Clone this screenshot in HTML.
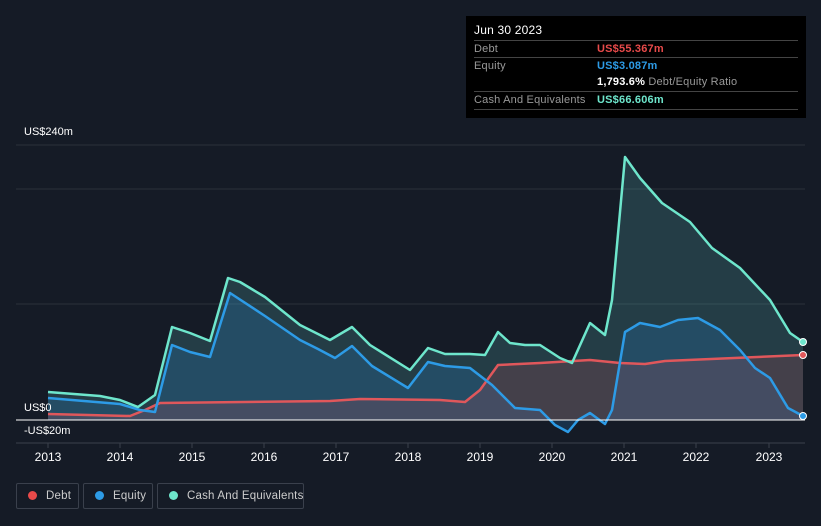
<!DOCTYPE html><html><head><style>
body{margin:0;background:#151b26;width:821px;height:526px;overflow:hidden;font-family:"Liberation Sans",sans-serif;position:relative;color:#fff}
.tt{position:absolute;left:466px;top:16px;width:340px;height:102px;background:#000}
.tt .r{position:absolute;left:8px;right:8px;font-size:11px;color:#999;height:17px;line-height:17px;letter-spacing:0.2px}
.ax{position:absolute;font-size:11px;color:#fff}
.lg{position:absolute;top:483px;height:26px;border:1px solid #3a404c;border-radius:2px;font-size:11.5px;color:#ccc;line-height:24px;box-sizing:border-box;white-space:nowrap;letter-spacing:0.2px}
.lg i{display:inline-block;width:9px;height:9px;border-radius:50%;margin:0 9px 0 11px;vertical-align:-1px}
</style></head><body>
<svg width="821" height="526" style="position:absolute;left:0;top:0">
<g stroke="#2a303b" stroke-width="1"><line x1="16" y1="145" x2="805" y2="145"/><line x1="16" y1="189" x2="805" y2="189"/><line x1="16" y1="304" x2="805" y2="304"/><line x1="16" y1="443" x2="805" y2="443" stroke="#3a404c"/></g>
<polygon fill="rgba(100,200,200,0.2)" points="48,420 48,392 100,396 120,400 138,407 155,395 172,327 190,333 210,341 228,278 240,282 265,297 300,325 330,340 352,327 370,345 410,370 428,348 445,354 470,354 485,355 498,332 510,343 525,345 540,345 560,358 572,363 590,323 605,335 612,300 625,157 640,178 662,203 690,222 712,248 740,268 770,300 790,333 803,342 803,420"/>
<polygon fill="rgba(40,140,220,0.2)" points="48,420 48,398 120,404 140,410 155,412 172,345 190,352 210,357 230,293 265,316 300,340 318,349 335,358 352,346 372,366 408,388 428,362 445,366 470,368 492,385 515,408 540,410 555,425 568,432 578,420 590,413 605,424 612,410 625,332 640,323 660,327 678,320 698,318 720,330 740,350 755,368 770,378 788,408 803,416 803,420"/>
<polygon fill="rgba(200,80,90,0.2)" points="48,420 48,414 130,416 145,410 160,403 330,401 360,399 440,400 465,402 480,390 498,365 540,363 590,360 620,363 645,364 665,361 803,355 803,420"/>
<g fill="none" stroke-width="2.5" stroke-linejoin="round">
<polyline stroke="#e0575b" points="48,414 130,416 145,410 160,403 330,401 360,399 440,400 465,402 480,390 498,365 540,363 590,360 620,363 645,364 665,361 803,355"/>
<polyline stroke="#2d9be6" points="48,398 120,404 140,410 155,412 172,345 190,352 210,357 230,293 265,316 300,340 318,349 335,358 352,346 372,366 408,388 428,362 445,366 470,368 492,385 515,408 540,410 555,425 568,432 578,420 590,413 605,424 612,410 625,332 640,323 660,327 678,320 698,318 720,330 740,350 755,368 770,378 788,408 803,416"/>
<polyline stroke="#6ee6cc" points="48,392 100,396 120,400 138,407 155,395 172,327 190,333 210,341 228,278 240,282 265,297 300,325 330,340 352,327 370,345 410,370 428,348 445,354 470,354 485,355 498,332 510,343 525,345 540,345 560,358 572,363 590,323 605,335 612,300 625,157 640,178 662,203 690,222 712,248 740,268 770,300 790,333 803,342"/>
</g>
<line x1="16" y1="420" x2="805" y2="420" stroke="#fff" stroke-width="1"/>
<circle cx="803" cy="355" r="3.5" fill="#e0575b" stroke="#fff"/><circle cx="803" cy="416" r="3.5" fill="#2d9be6" stroke="#fff"/><circle cx="803" cy="342" r="3.5" fill="#6ee6cc" stroke="#fff"/>
<g stroke="#3a404c"><line x1="48" y1="443" x2="48" y2="448"/><line x1="120" y1="443" x2="120" y2="448"/><line x1="192" y1="443" x2="192" y2="448"/><line x1="264" y1="443" x2="264" y2="448"/><line x1="336" y1="443" x2="336" y2="448"/><line x1="408" y1="443" x2="408" y2="448"/><line x1="480" y1="443" x2="480" y2="448"/><line x1="552" y1="443" x2="552" y2="448"/><line x1="624" y1="443" x2="624" y2="448"/><line x1="696" y1="443" x2="696" y2="448"/><line x1="769" y1="443" x2="769" y2="448"/></g>
<g fill="#fff" font-size="12" text-anchor="middle" font-family="Liberation Sans"><text x="48" y="461">2013</text><text x="120" y="461">2014</text><text x="192" y="461">2015</text><text x="264" y="461">2016</text><text x="336" y="461">2017</text><text x="408" y="461">2018</text><text x="480" y="461">2019</text><text x="552" y="461">2020</text><text x="624" y="461">2021</text><text x="696" y="461">2022</text><text x="769" y="461">2023</text></g>
</svg>
<div class="ax" style="left:24px;top:126px">US$240m</div>
<div class="ax" style="left:24px;top:402px">US$0</div>
<div class="ax" style="left:24px;top:425px">-US$20m</div>
<div class="tt">
<div class="r" style="top:6px;color:#fff;font-size:12px">Jun 30 2023</div>
<div class="r" style="top:24px;border-top:1px solid #444">Debt<span style="position:absolute;left:123px;color:#e84a4a;font-weight:bold">US$55.367m</span></div>
<div class="r" style="top:41px;border-top:1px solid #444">Equity<span style="position:absolute;left:123px;color:#2d9be6;font-weight:bold">US$3.087m</span></div>
<div class="r" style="top:58px"><span style="position:absolute;left:123px"><b style="color:#fff">1,793.6%</b> Debt/Equity Ratio</span></div>
<div class="r" style="top:75px;border-top:1px solid #444;border-bottom:1px solid #444">Cash And Equivalents<span style="position:absolute;left:123px;color:#6ee6cc;font-weight:bold">US$66.606m</span></div>
</div>
<div class="lg" style="left:16px;width:63px"><i style="background:#e84a4a"></i>Debt</div>
<div class="lg" style="left:83px;width:70px"><i style="background:#2d9be6"></i>Equity</div>
<div class="lg" style="left:157px;width:147px"><i style="background:#6ee6cc"></i>Cash And Equivalents</div>
</body></html>
